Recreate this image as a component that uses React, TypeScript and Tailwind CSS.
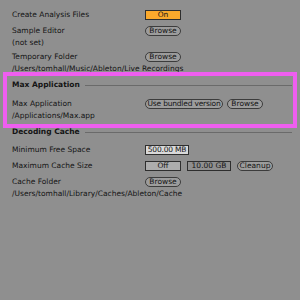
import React, { FC } from "react";

const Row: FC<{ label: string; className?: string; children?: React.ReactNode }> = ({ label, className = "", children }) => (
  <div className={`flex h-[12px] items-center ${className}`}>
    <span className="w-[133px] shrink-0 whitespace-nowrap">{label}</span>
    <div className="flex items-center gap-[4px]">{children}</div>
  </div>
);

const Pill: FC<{ value: string; className?: string }> = ({ value, className = "" }) => (
  <span className={`flex h-[10px] shrink-0 items-center justify-center whitespace-nowrap rounded-full border border-[#3c3c3c] bg-[#9c9c9c] leading-none ${className}`}>
    {value}
  </span>
);

const Box: FC<{ value: string; className?: string }> = ({ value, className = "" }) => (
  <span className={`flex h-[10px] shrink-0 items-center justify-center whitespace-nowrap border border-[#2e2e2e] leading-none ${className}`}>
    {value}
  </span>
);

const Header: FC<{ label: string; className?: string }> = ({ label, className = "" }) => (
  <div className={`flex h-[12px] items-center pr-[8px] ${className}`}>
    <span className="whitespace-nowrap font-bold">{label}</span>
    <div className="ml-[5px] h-px flex-1 bg-[#6a6a6a]" />
  </div>
);

const App: FC = () => {
  return (
    <div
      className="relative h-[300px] w-[300px] overflow-hidden bg-[#8f8f8f] pl-[12px] pt-[9px] text-[7.5px] text-[#141414]"
      style={{ fontFamily: '"DejaVu Sans", sans-serif' }}
    >
      <Row label="Create Analysis Files">
        <Box value="On" className="w-[36px] bg-[#fba92c]" />
      </Row>
      <Row label="Sample Editor" className="mt-[4px]">
        <Pill value="Browse" className="w-[36px]" />
      </Row>
      <Row label="(not set)" />
      <Row label="Temporary Folder" className="mt-[2px]">
        <Pill value="Browse" className="w-[36px]" />
      </Row>
      <div className="flex h-[12px] items-center whitespace-nowrap">/Users/tomhall/Music/Ableton/Live Recordings</div>

      <Header label="Max Application" className="mt-[4px]" />
      <Row label="Max Application" className="mt-[7px]">
        <Pill value="Use bundled version" className="w-[78px] tracking-[-0.2px]" />
        <Pill value="Browse" className="w-[36px]" />
      </Row>
      <div className="flex h-[12px] items-center whitespace-nowrap">/Applications/Max.app</div>

      <Header label="Decoding Cache" className="mt-[4px]" />
      <Row label="Minimum Free Space" className="mt-[6px]">
        <Box value="500.00 MB" className="w-[44px] bg-[#d9d9d9] tracking-[-0.2px]" />
      </Row>
      <Row label="Maximum Cache Size" className="mt-[4px]">
        <Box value="Off" className="w-[36px] bg-[#adadad]" />
        <Box value="10.00 GB" className="ml-[2px] w-[44px] bg-[#8f8f8f]" />
        <Pill value="Cleanup" className="ml-[2px] w-[36px]" />
      </Row>
      <Row label="Cache Folder" className="mt-[4px]">
        <Pill value="Browse" className="w-[36px]" />
      </Row>
      <div className="flex h-[12px] items-center whitespace-nowrap">/Users/tomhall/Library/Caches/Ableton/Cache</div>

      <div className="absolute left-[3px] top-[72px] h-[56px] w-[294px] border-4 border-[#ef5ef0]" />
    </div>
  );
};

export default App;
